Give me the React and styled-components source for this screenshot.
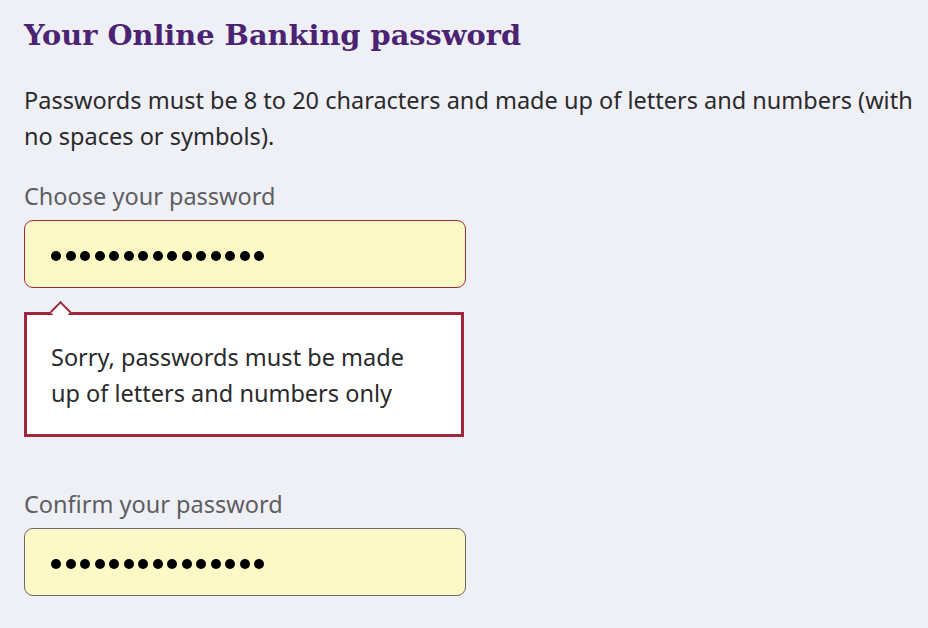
import React from 'react';
import styled, { createGlobalStyle } from 'styled-components';

const GlobalStyle = createGlobalStyle`
  body {
    margin: 0;
    padding: 0;
    background-color: #eff0f6;
    font-family: 'Noto Sans', 'Open Sans', sans-serif;
    color: #2a2a2d;
  }
`;

const Page = styled.main`
  padding: 17px 0 40px 24px;
  width: 904px;
`;

const Title = styled.h1`
  margin: 0;
  font-family: 'DejaVu Serif', 'Liberation Serif', serif;
  font-weight: bold;
  font-size: 28.8px;
  line-height: 36px;
  color: #4a2373;
`;

const Intro = styled.p`
  margin: 29px 0 0 0;
  font-size: 23.5px;
  line-height: 36px;
`;

const Label = styled.label`
  display: block;
  margin-top: ${p => p.$gap}px;
  font-size: 23.5px;
  line-height: 36px;
  color: #5d5d62;
`;

const Field = styled.div`
  box-sizing: border-box;
  margin-top: 6px;
  width: 442px;
  height: 68px;
  padding: 4px 26px 0 26px;
  display: flex;
  align-items: center;
  gap: 4.5px;
  background-color: #fdf9c6;
  border: 1px solid ${p => (p.$invalid ? '#9c2c3c' : '#6a6a6a')};
  border-radius: 9px;
`;

const Dot = styled.span`
  width: 10px;
  height: 10px;
  border-radius: 50%;
  background-color: #000;
`;

const ErrorBox = styled.div`
  position: relative;
  box-sizing: border-box;
  margin-top: 24px;
  width: 440px;
  padding: 24px 24px 23px 24px;
  background-color: #fff;
  border: 3px solid #a0283c;
  font-size: 23.5px;
  line-height: 36px;
  color: #2a2a2d;

  /* little pointer up to the field */
  &::before {
    content: '';
    position: absolute;
    top: -11px;
    left: 26px;
    width: 13px;
    height: 13px;
    background-color: #fff;
    border-top: 2px solid #a0283c;
    border-left: 2px solid #a0283c;
    transform: rotate(45deg);
  }
`;

const PasswordMask = ({ length, invalid }) => (
  <Field $invalid={invalid}>
    {Array.from({ length }).map((_, i) => (
      <Dot key={i} />
    ))}
  </Field>
);

const App = () => {
  return (
    <>
      <GlobalStyle />
      <Page>
        <Title>Your Online Banking password</Title>
        <Intro>
          Passwords must be 8 to 20 characters and made up of letters and numbers (with no
          spaces or symbols).
        </Intro>

        <Label $gap={24}>Choose your password</Label>
        <PasswordMask length={15} invalid />
        <ErrorBox>
          Sorry, passwords must be made
          <br />
          up of letters and numbers only
        </ErrorBox>

        <Label $gap={49}>Confirm your password</Label>
        <PasswordMask length={15} />
      </Page>
    </>
  );
};

export default App;
